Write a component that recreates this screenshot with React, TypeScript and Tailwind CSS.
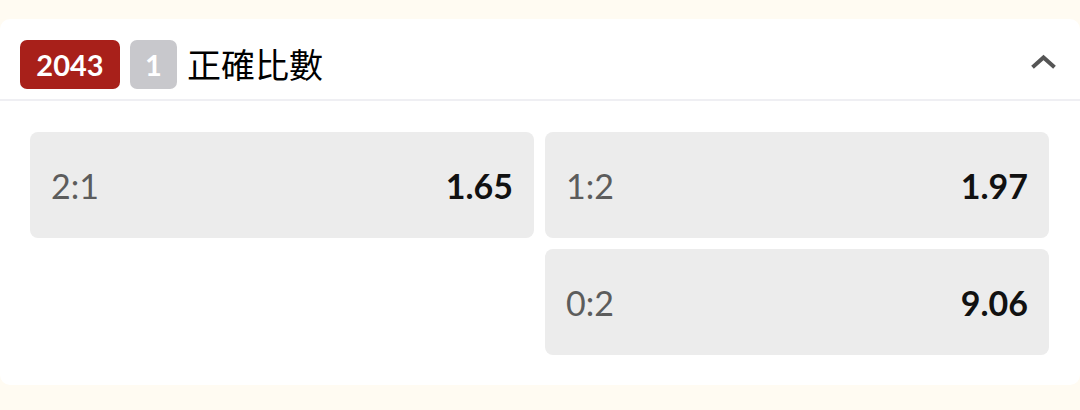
import React from 'react';

type Odd = { score: string; price: string };

const COLUMNS: Odd[][] = [
  [{ score: '2:1', price: '1.65' }],
  [
    { score: '1:2', price: '1.97' },
    { score: '0:2', price: '9.06' },
  ],
];

const OddCell: React.FC<{ odd: Odd }> = ({ odd }) => (
  <div className="flex h-[106px] items-center justify-between rounded-[8px] bg-[#ececec] pl-[21px] pr-[21px]">
    <span className="text-[34px] text-[#5c5c5c]">{odd.score}</span>
    <span className="text-[34px] font-bold text-[#111111]">{odd.price}</span>
  </div>
);

const App: React.FC = () => {
  return (
    <div
      className="h-[410px] w-[1080px] bg-[#fffbf2] pt-[19px]"
      style={{ fontFamily: 'Lato, "Noto Sans CJK TC", sans-serif' }}
    >
      <section className="rounded-[10px] bg-white">
        <header className="flex h-[82px] items-start border-b-2 border-[#efeff3] pl-[20px] pr-[24px] pt-[21px]">
          <span className="flex h-[49px] w-[100px] items-center justify-center rounded-[7px] bg-[#a8201a] text-[29px] font-bold text-white">
            2043
          </span>
          <span className="ml-[10px] flex h-[49px] w-[47px] items-center justify-center rounded-[7px] bg-[#c8c8cc] text-[29px] font-bold text-white">
            1
          </span>
          <h2 className="ml-[10px] mt-[3px] text-[34px] leading-[44px] font-normal text-black">正確比數</h2>
          <svg
            className="ml-auto mt-[14px]"
            width="25"
            height="16"
            viewBox="0 0 25 16"
            fill="none"
            stroke="#555555"
            strokeWidth="4"
            strokeLinecap="square"
          >
            <polyline points="3,12 12.5,3.5 22,12" />
          </svg>
        </header>

        <div className="grid grid-cols-2 gap-[11px] pb-[30px] pl-[30px] pr-[31px] pt-[31px]">
          {COLUMNS.map((col, i) => (
            <div key={i} className="flex flex-col gap-[11px]">
              {col.map((odd) => (
                <OddCell key={odd.score} odd={odd} />
              ))}
            </div>
          ))}
        </div>
      </section>
    </div>
  );
};

export default App;
